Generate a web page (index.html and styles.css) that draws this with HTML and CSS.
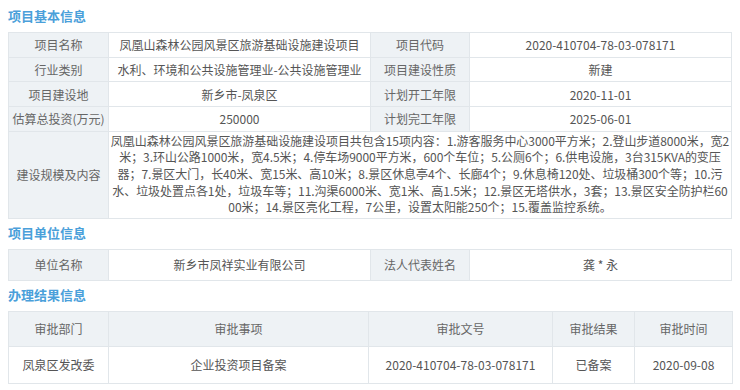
FILE: index.html
```html
<!DOCTYPE html>
<html lang="zh-CN">
<head>
<meta charset="utf-8">
<title>项目信息</title>
<link rel="stylesheet" href="styles.css">
</head>
<body>
<div class="page">
  <h3 class="sec-title">项目基本信息</h3>
  <table class="info">
    <colgroup><col class="c-lab"><col class="c-val"><col class="c-lab2"><col class="c-val"></colgroup>
    <tr class="r"><td class="lab">项目名称</td><td>凤凰山森林公园风景区旅游基础设施建设项目</td><td class="lab">项目代码</td><td>2020-410704-78-03-078171</td></tr>
    <tr class="r"><td class="lab">行业类别</td><td>水利、环境和公共设施管理业-公共设施管理业</td><td class="lab">项目建设性质</td><td>新建</td></tr>
    <tr class="r"><td class="lab">项目建设地</td><td>新乡市-凤泉区</td><td class="lab">计划开工年限</td><td>2020-11-01</td></tr>
    <tr class="r"><td class="lab">估算总投资(万元)</td><td>250000</td><td class="lab">计划完工年限</td><td>2025-06-01</td></tr>
    <tr><td class="lab">建设规模及内容</td><td colspan="3" class="desc">凤凰山森林公园风景区旅游基础设施建设项目共包含15项内容：1.游客服务中心3000平方米；2.登山步道8000米，宽2<br>米；3.环山公路1000米，宽4.5米；4.停车场9000平方米，600个车位；5.公厕6个；6.供电设施，3台315KVA的变压<br>器；7.景区大门，长40米、宽15米、高10米；8.景区休息亭4个、长廊4个；9.休息椅120处、垃圾桶300个等；10.污<br>水、垃圾处置点各1处，垃圾车等；11.沟渠6000米、宽1米、高1.5米；12.景区无塔供水，3套；13.景区安全防护栏60<br>00米；14.景区亮化工程，7公里，设置太阳能250个；15.覆盖监控系统。</td></tr>
  </table>

  <h3 class="sec-title">项目单位信息</h3>
  <table class="info">
    <colgroup><col class="c-lab"><col class="c-val"><col class="c-lab2"><col class="c-val"></colgroup>
    <tr class="r2"><td class="lab">单位名称</td><td>新乡市凤祥实业有限公司</td><td class="lab">法人代表姓名</td><td>龚 * 永</td></tr>
  </table>

  <h3 class="sec-title">办理结果信息</h3>
  <table class="info">
    <colgroup><col class="c-lab"><col class="c-t2"><col class="c-t3"><col class="c-t4"><col class="c-t5"></colgroup>
    <tr class="hd"><td>审批部门</td><td>审批事项</td><td>审批文号</td><td>审批结果</td><td>审批时间</td></tr>
    <tr class="dr"><td>凤泉区发改委</td><td>企业投资项目备案</td><td>2020-410704-78-03-078171</td><td>已备案</td><td>2020-09-08</td></tr>
  </table>
</div>
</body>
</html>
```

FILE: styles.css
```css
html, body {
  margin: 0;
  padding: 0;
  background: #ffffff;
}
body {
  font-family: "Noto Sans CJK SC", "Noto Sans", sans-serif;
  color: #555555;
}
.page {
  padding: 6px 8px 0 8px;
  width: 724px;
}
.sec-title {
  margin: 0 0 6px 0;
  height: 20px;
  line-height: 20px;
  font-size: 13px;
  font-weight: bold;
  color: #4aa0da;
}
.info + .sec-title {
  margin-top: 4px;
}
.info {
  width: 724px;
  border-collapse: collapse;
  table-layout: fixed;
  font-size: 12px;
}
.info td {
  border: 1px solid #e1e6ea;
  text-align: center;
  padding: 0;
  color: #555555;
}
.c-lab { width: 100px; }
.c-val { width: 262px; }
.c-lab2 { width: 99px; }
.c-t2 { width: 260px; }
.c-t3 { width: 184px; }
.c-t4 { width: 82px; }
.c-t5 { width: 98px; }
.info td.lab {
  background: #eef2f5;
  color: #666666;
}
.r td { height: 23.7px; }
.r2 td { height: 30px; }
.hd td {
  height: 34px;
  background: #eef2f5;
  color: #666666;
}
.dr td { height: 36px; }
.info td.desc {
  line-height: 16.6px;
  padding: 1px 0 2px 0;
  white-space: nowrap;
  letter-spacing: -0.05px;
}
```
